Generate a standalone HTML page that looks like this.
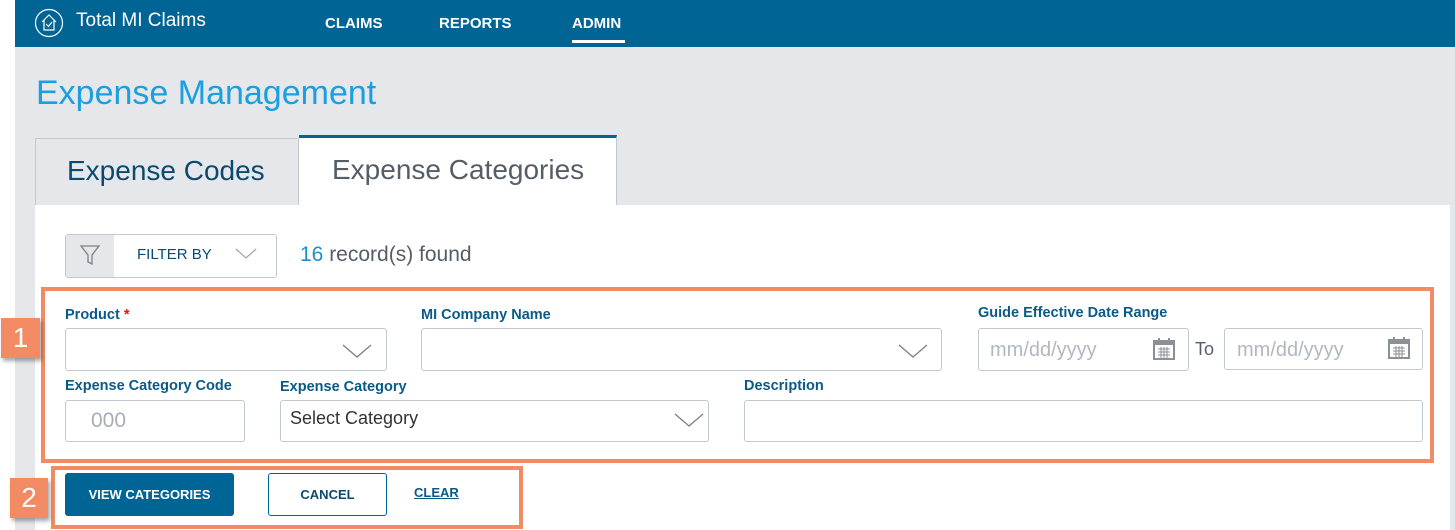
<!DOCTYPE html>
<html><head><style>
*{box-sizing:border-box;margin:0;padding:0}
body{width:1455px;height:530px;overflow:hidden;background:#fff;font-family:"Liberation Sans",sans-serif;position:relative}
.a{position:absolute}
.lbl{position:absolute;color:#0a5a88;font-weight:bold;font-size:14.5px}
.inp{position:absolute;border:1px solid #c3c8cf;border-radius:3px;background:#fff}
.chev{position:absolute;width:30px;height:16px}
</style></head><body>
<div class="a" style="left:15px;top:0;width:1440px;height:530px;background:#e6e7eb"></div>
<div class="a" style="left:15px;top:0;width:1440px;height:47px;background:#006595"></div>
<svg class="a" style="left:34px;top:8px" width="30" height="30" viewBox="0 0 30 30"><circle cx="15" cy="15" r="13.5" fill="none" stroke="#fff" stroke-width="1.2"/><path d="M8 14 L15 7 L22 14 M10 12 V22 H20 V12 M12 16 L14.5 18.5 L18 14" fill="none" stroke="#fff" stroke-width="1.2"/></svg>
<div class="a" style="left:76px;top:10px;color:#fff;font-size:19px">Total MI Claims</div>
<div class="a" style="left:325px;top:15px;color:#fff;font-size:15px;font-weight:bold">CLAIMS</div>
<div class="a" style="left:439px;top:15px;color:#fff;font-size:15px;font-weight:bold">REPORTS</div>
<div class="a" style="left:572px;top:15px;color:#fff;font-size:15px;font-weight:bold">ADMIN</div>
<div class="a" style="left:572px;top:40px;width:53px;height:3px;background:#fff"></div>
<div class="a" style="left:36px;top:74px;color:#1a9fe0;font-size:34px">Expense Management</div>
<div class="a" style="left:35px;top:138px;width:264px;height:68px;background:#e6e7eb;border:1px solid #c3c8cf;border-bottom:none"></div>
<div class="a" style="left:67px;top:155px;color:#0a4a70;font-size:28px">Expense Codes</div>
<div class="a" style="left:299px;top:135px;width:318px;height:71px;background:#fff;border-top:3px solid #006595;border-right:1px solid #c3c8cf"></div>
<div class="a" style="left:332px;top:154px;color:#555e66;font-size:28px">Expense Categories</div>
<div class="a" style="left:35px;top:205px;width:1415px;height:325px;background:#fff"></div>
<div class="a" style="left:65px;top:234px;width:212px;height:44px;border:1px solid #c3c8cf;border-radius:3px;background:#fff"></div>
<div class="a" style="left:66px;top:235px;width:48px;height:42px;background:#e6e7eb"></div>
<svg class="a" style="left:79px;top:244px" width="22" height="22" viewBox="0 0 22 22"><path d="M2 2 H20 L13 11 V20 L9 18 V11 Z" fill="none" stroke="#7a8088" stroke-width="1.3"/></svg>
<div class="a" style="left:137px;top:246px;color:#0a4a70;font-size:15px">FILTER BY</div>
<svg class="a" style="left:235px;top:248px" width="22" height="12"><path d="M1 1 L11 10 L21 1" fill="none" stroke="#9aa3ab" stroke-width="1.2"/></svg>
<div class="a" style="left:300px;top:243px;font-size:21px;color:#555e66"><span style="color:#1a8fd0">16</span> record(s) found</div>
<div class="a" style="left:41px;top:287px;width:1393px;height:176px;border:4px solid #f28a63"></div>
<div class="lbl" style="left:65px;top:307px">Product <span style="color:#e11">*</span></div>
<div class="inp" style="left:65px;top:328px;width:322px;height:43px"></div>
<svg class="a" style="left:342px;top:343px" width="30" height="16"><path d="M1 2 L15 14 L29 2" fill="none" stroke="#7a8088" stroke-width="1.3"/></svg>
<div class="lbl" style="left:421px;top:307px">MI Company Name</div>
<div class="inp" style="left:421px;top:328px;width:521px;height:43px"></div>
<svg class="a" style="left:898px;top:343px" width="30" height="16"><path d="M1 2 L15 14 L29 2" fill="none" stroke="#7a8088" stroke-width="1.3"/></svg>
<div class="lbl" style="left:978px;top:305px">Guide Effective Date Range</div>
<div class="inp" style="left:978px;top:328px;width:211px;height:43px"></div>
<div class="a" style="left:990px;top:339px;color:#b0b8c0;font-size:20px">mm/dd/yyyy</div>
<div class="a" style="left:1195px;top:339px;color:#555e66;font-size:18px">To</div>
<div class="inp" style="left:1224px;top:328px;width:199px;height:42px"></div>
<div class="a" style="left:1237px;top:339px;color:#b0b8c0;font-size:20px">mm/dd/yyyy</div>
<svg class="a" style="left:1152px;top:337px" width="24" height="24" viewBox="0 0 24 24"><rect x="2" y="4" width="20" height="18" fill="none" stroke="#8a9096" stroke-width="2"/><rect x="2" y="4" width="20" height="4" fill="#8a9096"/><path d="M6 12H18M6 15H18M6 18H18M9 10V21M12 10V21M15 10V21" stroke="#8a9096" stroke-width="1"/><rect x="6" y="1" width="2" height="4" fill="#8a9096"/><rect x="16" y="1" width="2" height="4" fill="#8a9096"/></svg>
<svg class="a" style="left:1387px;top:336px" width="24" height="24" viewBox="0 0 24 24"><rect x="2" y="4" width="20" height="18" fill="none" stroke="#8a9096" stroke-width="2"/><rect x="2" y="4" width="20" height="4" fill="#8a9096"/><path d="M6 12H18M6 15H18M6 18H18M9 10V21M12 10V21M15 10V21" stroke="#8a9096" stroke-width="1"/><rect x="6" y="1" width="2" height="4" fill="#8a9096"/><rect x="16" y="1" width="2" height="4" fill="#8a9096"/></svg>
<div class="lbl" style="left:65px;top:378px">Expense Category Code</div>
<div class="inp" style="left:65px;top:400px;width:180px;height:42px"></div>
<div class="a" style="left:91px;top:409px;color:#a8adb3;font-size:21px">000</div>
<div class="lbl" style="left:280px;top:379px">Expense Category</div>
<div class="inp" style="left:280px;top:400px;width:429px;height:42px"></div>
<div class="a" style="left:290px;top:408px;color:#333;font-size:18px">Select Category</div>
<svg class="a" style="left:674px;top:412px" width="30" height="16"><path d="M1 2 L15 14 L29 2" fill="none" stroke="#7a8088" stroke-width="1.3"/></svg>
<div class="lbl" style="left:744px;top:378px">Description</div>
<div class="inp" style="left:744px;top:400px;width:679px;height:42px"></div>
<div class="a" style="left:51px;top:466px;width:472px;height:63px;border:4px solid #f28a63"></div>
<div class="a" style="left:65px;top:473px;width:169px;height:43px;background:#006595;border-radius:3px;color:#fff;font-weight:bold;font-size:13px;text-align:center;line-height:43px">VIEW CATEGORIES</div>
<div class="a" style="left:268px;top:473px;width:119px;height:43px;border:1px solid #006595;border-radius:3px;color:#0a4a70;font-weight:bold;font-size:13px;text-align:center;line-height:41px">CANCEL</div>
<div class="a" style="left:414px;top:485px;color:#0a5a88;font-weight:bold;font-size:13px;text-decoration:underline">CLEAR</div>
<div class="a" style="left:1px;top:318px;width:39px;height:40px;background:#f28a63;color:#fff;font-size:28px;text-align:center;line-height:40px;box-shadow:2px 3px 4px rgba(0,0,0,.35)">1</div>
<div class="a" style="left:10px;top:478px;width:38px;height:40px;background:#f28a63;color:#fff;font-size:28px;text-align:center;line-height:40px;box-shadow:2px 3px 4px rgba(0,0,0,.35)">2</div>
</body></html>
